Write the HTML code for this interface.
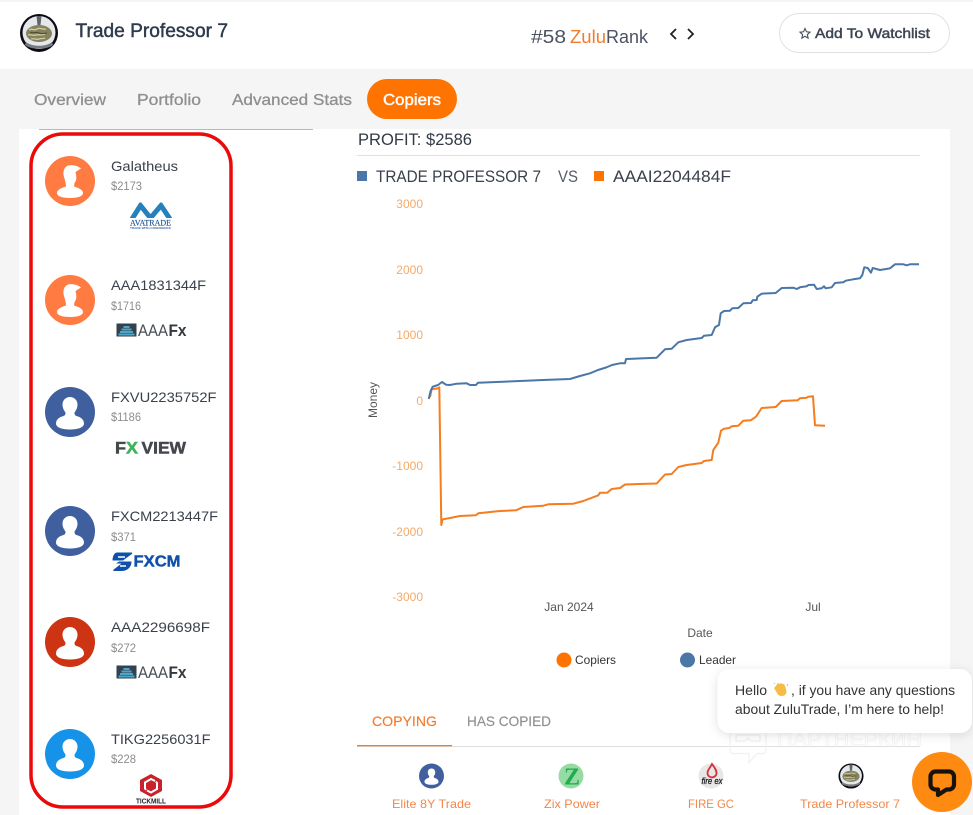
<!DOCTYPE html>
<html lang="en"><head><meta charset="utf-8"><title>Trade Professor 7</title>
<style>
html,body{margin:0;padding:0;background:#f5f5f5;width:973px;height:815px;overflow:hidden}
svg{display:block}
text{font-family:"Liberation Sans",sans-serif}
.m{stroke-width:.45}
</style></head><body>
<svg xmlns="http://www.w3.org/2000/svg" width="973" height="815" viewBox="0 0 973 815">
<defs>
<filter id="sh" x="-10%" y="-20%" width="120%" height="150%"><feDropShadow dx="0" dy="2" stdDeviation="5" flood-color="#000" flood-opacity=".12"/></filter>
<g id="p1"><path d="M-2-15.500C2-16.500 8-15 11-12.500L5.500-9C6.500-5 6.500-2 6-.5L4.500 2L4 5.500C9 7 13 9 13 12C13 15.500 7 17 0 17S-13 15.500-13 12C-13 9-9 7-4 5.500C-4 3-5-1-6-4C-7.500-9-6-14-2-15.500z" fill="#fff"/></g>
<g id="p2"><path d="M0-15c4.500 0 7.500 3.500 7.500 7.500c0 3.500-1.500 6-3 8c0 2 .5 3 2 3.500c4 1 7.500 3.500 7.500 7.500c0 4-6 6-14 6s-14-2-14-6c0-4 3.500-6.500 7.500-7.500c1.500-.5 2-1.500 2-3.500c-1.500-2-3-4.500-3-8c0-4 3-7.500 7.500-7.500z" fill="#fff"/></g>
<g id="tp"><circle r="19" fill="#0c0c10"/><circle cy="-.5" r="16.500" fill="#e4e8ec"/><path d="M-2.500-17h5l-1 9h-3z" fill="#5f646c"/><path d="M-13 9c6 5 20 5 26 0l1 3c-6 5-22 5-28 0z" fill="#777a80"/><ellipse cx="0" cy="0.500" rx="13" ry="8.500" fill="#85825c"/><path d="M-10-3c3-2 5 1 8-1s6 1 9 0M-11 2c3-1 5 1 8 0s6 1 9-1M-8 6c3-1 5 1 8 0s4 0 6-1" stroke="#cfcca6" stroke-width="1.300" fill="none"/><path d="M-9-.5c4 1 6-1 9 .5s5 0 8 0" stroke="#4d4b32" stroke-width="1" fill="none"/></g>
<g id="aaa"><rect x="0" y="0" width="20" height="13" fill="#33424e"/><path d="M7 2.500h6v2H7zM5 5h10v2H5zM3.500 7.500h13v2h-13zM2 10h16v2H2z" fill="#4fa5c6"/><text x="21.500" y="12.500" font-size="16.500" fill="#4a4f55" textLength="30" lengthAdjust="spacingAndGlyphs">AAA</text><text x="52" y="12.500" font-size="16.500" font-weight="700" fill="#33383d" textLength="18" lengthAdjust="spacingAndGlyphs">Fx</text></g>
<clipPath id="av"><rect x="128" y="202.500" width="45" height="15.500"/></clipPath>
</defs>

<rect width="973" height="815" fill="#f5f5f5"/>
<rect y="2" width="973" height="67" fill="#fff"/>
<rect x="19" y="129" width="931" height="686" fill="#fff"/>
<rect x="39" y="129" width="274" height="1" fill="#f5a860"/>

<!-- header -->
<use href="#tp" x="39" y="33"/>
<text x="75.500" y="37" font-size="19" fill="#2e3a4d" stroke="#2e3a4d" class="m" textLength="152.500" lengthAdjust="spacingAndGlyphs">Trade Professor 7</text>
<text x="531" y="43" font-size="18" fill="#4b5260" textLength="35" lengthAdjust="spacingAndGlyphs">#58</text>
<text x="570" y="43" font-size="18" fill="#f47b2a" textLength="36" lengthAdjust="spacingAndGlyphs">Zulu</text>
<text x="606" y="43" font-size="18" fill="#4b5260" textLength="42" lengthAdjust="spacingAndGlyphs">Rank</text>
<path d="M676 29l-5 5l5 5M688 29l5 5l-5 5" fill="none" stroke="#222" stroke-width="1.800"/>
<rect x="779.500" y="13.500" width="170" height="39" rx="19.500" fill="#fff" stroke="#dfe1e5"/>
<path d="M805 28.500l1.500 3.300l3.500.4l-2.600 2.400l.7 3.500l-3.100-1.800l-3.100 1.800l.7-3.500l-2.600-2.400l3.500-.4z" fill="none" stroke="#4a4f5c" stroke-width="1.100"/>
<text x="815" y="38" font-size="14" fill="#3d4452" stroke="#3d4452" class="m" textLength="115" lengthAdjust="spacingAndGlyphs">Add To Watchlist</text>

<!-- tabs -->
<g font-size="16" fill="#8f8f8f" stroke="#8f8f8f" stroke-width=".3">
<text x="34" y="105" textLength="72" lengthAdjust="spacingAndGlyphs">Overview</text>
<text x="137" y="105" textLength="64" lengthAdjust="spacingAndGlyphs">Portfolio</text>
<text x="232" y="105" textLength="120" lengthAdjust="spacingAndGlyphs">Advanced Stats</text>
</g>
<rect x="367" y="79" width="90" height="40" rx="20" fill="#ff7300"/>
<text x="383" y="105" font-size="16" fill="#fff" stroke="#fff" class="m" textLength="58" lengthAdjust="spacingAndGlyphs">Copiers</text>

<!-- red box -->
<rect x="31" y="134" width="200" height="673" rx="32" fill="none" stroke="#ea0a0a" stroke-width="3.500"/>

<!-- list -->
<circle cx="70" cy="181" r="25" fill="#ff7b42"/><use href="#p1" x="70" y="181"/>
<circle cx="70" cy="300" r="25" fill="#ff7b42"/><use href="#p1" x="70" y="300"/>
<circle cx="70" cy="412" r="25" fill="#3f5f9f"/><use href="#p2" x="70" y="412"/>
<circle cx="70" cy="531" r="25" fill="#3f5f9f"/><use href="#p2" x="70" y="531"/>
<circle cx="70" cy="642" r="25" fill="#cc3414"/><use href="#p2" x="70" y="642"/>
<circle cx="70" cy="754" r="25" fill="#1692e8"/><use href="#p2" x="70" y="754"/>
<g font-size="14" fill="#3a404c">
<text x="111" y="171" textLength="67" lengthAdjust="spacingAndGlyphs">Galatheus</text>
<text x="111" y="290" textLength="95" lengthAdjust="spacingAndGlyphs">AAA1831344F</text>
<text x="111" y="402" textLength="105.500" lengthAdjust="spacingAndGlyphs">FXVU2235752F</text>
<text x="111" y="521" textLength="107" lengthAdjust="spacingAndGlyphs">FXCM2213447F</text>
<text x="111" y="632" textLength="99" lengthAdjust="spacingAndGlyphs">AAA2296698F</text>
<text x="111" y="744" textLength="99.500" lengthAdjust="spacingAndGlyphs">TIKG2256031F</text>
</g>
<g font-size="11.500" fill="#8c8c8c">
<text x="111" y="190" textLength="31" lengthAdjust="spacingAndGlyphs">$2173</text>
<text x="111" y="310" textLength="30" lengthAdjust="spacingAndGlyphs">$1716</text>
<text x="111" y="421" textLength="30" lengthAdjust="spacingAndGlyphs">$1186</text>
<text x="111" y="541" textLength="25" lengthAdjust="spacingAndGlyphs">$371</text>
<text x="111" y="652" textLength="25" lengthAdjust="spacingAndGlyphs">$272</text>
<text x="111" y="763" textLength="25" lengthAdjust="spacingAndGlyphs">$228</text>
</g>

<!-- AvaTrade -->
<path clip-path="url(#av)" d="M132 219L140.500 205.500L150.500 218L161 205.500L170 219" fill="none" stroke="#2481bd" stroke-width="5"/>
<text x="130" y="225.500" font-size="8.500" fill="#20518f" stroke="#20518f" stroke-width=".15" style="font-family:'Liberation Serif',serif" textLength="41" lengthAdjust="spacingAndGlyphs">AVATRADE</text>
<text x="130" y="229" font-size="2.800" font-weight="700" fill="#3a6ea8" textLength="41" lengthAdjust="spacingAndGlyphs">TRADE WITH CONFIDENCE</text>

<!-- AAAFx -->
<use href="#aaa" x="116.500" y="323.500"/>
<use href="#aaa" x="116.500" y="665.500"/>

<!-- FXVIEW -->
<text x="115" y="453.500" font-size="17" font-weight="700" fill="#44474b" stroke="#44474b" stroke-width=".5" textLength="11" lengthAdjust="spacingAndGlyphs">F</text>
<text x="126" y="453.500" font-size="17" font-weight="700" fill="#3cb35c" stroke="#3cb35c" stroke-width=".5" textLength="12" lengthAdjust="spacingAndGlyphs">X</text>
<text x="141.500" y="453.500" font-size="17" font-weight="700" fill="#44474b" stroke="#44474b" stroke-width=".5" textLength="44.500" lengthAdjust="spacingAndGlyphs">VIEW</text>

<!-- FXCM -->
<path d="M117 552.500h14.500c.8 0 1 .8.3 1.500l-8.800 6.500h-10.500c0-3.500 1.500-8 4.500-8z" fill="#0e50ab"/>
<path d="M131.500 561.500c0 5.500-4 9.500-10 9.500h-7.500c-.8 0-1-.8-.3-1.500l7.800-6h-5.500l3-2z" fill="#0e50ab"/>
<path d="M118 557h7M120 566h6" stroke="#fff" stroke-width="1.500"/>
<text x="133.500" y="566.500" font-size="15.500" font-weight="700" fill="#0e50ab" stroke="#0e50ab" stroke-width=".4" textLength="47" lengthAdjust="spacingAndGlyphs">FXCM</text>

<!-- Tickmill -->
<path d="M151 774l11 6v11l-11 6l-11-6v-11z" fill="#c8232c"/>
<path d="M146 790l-1-1.500v-6l6-3.500l4 2M156 781.500l1 1.500v6l-6 3.500l-4-2" fill="none" stroke="#fff" stroke-width="2"/>
<text x="136" y="803.500" font-size="7" font-weight="700" fill="#222" textLength="30" lengthAdjust="spacingAndGlyphs">TICKMILL</text>

<!-- profit -->
<text x="358" y="145" font-size="17" fill="#333a45" textLength="114" lengthAdjust="spacingAndGlyphs">PROFIT: $2586</text>
<rect x="357" y="155" width="563" height="1" fill="#e0e0e0"/>
<rect x="357" y="171" width="10" height="10" fill="#4a76a8"/>
<text x="376" y="182" font-size="17" fill="#3a404c" textLength="165" lengthAdjust="spacingAndGlyphs">TRADE PROFESSOR 7</text>
<text x="558" y="182" font-size="17" fill="#555b66" textLength="20" lengthAdjust="spacingAndGlyphs">VS</text>
<rect x="594" y="171" width="10" height="10" fill="#ff7300"/>
<text x="613" y="182" font-size="17" fill="#3a404c" textLength="118" lengthAdjust="spacingAndGlyphs">AAAI2204484F</text>

<!-- axis -->
<g font-size="12" fill="#f5a968" text-anchor="end">
<text x="423" y="208">3000</text><text x="423" y="274">2000</text><text x="423" y="339">1000</text><text x="423" y="405">0</text><text x="423" y="470">-1000</text><text x="423" y="536">-2000</text><text x="423" y="601">-3000</text>
</g>
<text transform="translate(377,400) rotate(-90)" font-size="12" fill="#555" text-anchor="middle">Money</text>
<g font-size="12" fill="#555" text-anchor="middle">
<text x="569" y="611">Jan 2024</text><text x="813" y="611">Jul</text><text x="700" y="637">Date</text>
</g>

<!-- chart -->
<path fill="none" stroke="#f57c1f" stroke-width="2" stroke-linejoin="round" d="M430 397L431.700 389.300L438.300 388.300L439.300 387.300L441.300 525L442.700 519.300L450 518L460 516L476 515.300L478.300 513.300L500 511L516 510.300L523.300 507L543.300 505.700L548.300 504.300L573.300 503.700L583.300 501L598.300 495.300L600 492.700L607.300 492.700L611.700 489L620 488L625 484.500L656.700 483.500L665 474.500L671.700 474L678.300 467L686.700 465L701.700 463L704 461L711.700 460L713.300 450L718.300 442.700L721 430.700L724 428.700L729.300 428L731.700 426.300L738.300 425.700L743.300 420.700L750.700 420.300L756 416.700L761.700 408L775.700 407L781.700 401L797.700 400.300L800 398.300L806.700 397.700L808.300 396.700L813 396.300L815 425.300L825 425.700"/>
<path fill="none" stroke="#4a76a8" stroke-width="2" stroke-linejoin="round" d="M428.700 399L430.700 390.700L432.700 386.700L438 385L442 382L446 384.700L450 385L456.700 383.700L466.700 383.300L470 385L476 385L478 382.700L520 381L543 380L570 379L580 376L590 373.300L598 370L606 367.500L612 365L620 363.300L625 363.300L626 359L656.700 357.700L665 349.300L671.700 348.700L678.300 342.300L686.700 340L701.700 338L704 335.700L711.700 335L715 327.300L719 325L720.700 313.300L724 311L730 310.700L732.300 308.300L738.300 308L743.300 303.300L751 303L752.700 300.300L756.700 300L757.300 296.700L761.700 293.700L775.700 293L781.700 288L793.300 287.700L796.700 289L800 287.300L806.700 286.300L808.300 285L814 284.700L816.700 289L821.700 288.300L824 286.300L825.700 288.300L831.700 287.300L835 283L843.300 282.300L845.700 280.700L853.300 279.300L860 278.300L862.300 275L864.300 267.300L867.700 268L871 272.700L872.700 268L880 270L890 268.300L895 264.300L903.300 264.300L906.700 265.300L910 264.300L919 264.300"/>

<!-- chart legend -->
<circle cx="564" cy="660" r="7.500" fill="#ff7300"/>
<text x="575" y="664" font-size="12" fill="#333" textLength="41" lengthAdjust="spacingAndGlyphs">Copiers</text>
<circle cx="687.500" cy="660" r="7.500" fill="#4a76a8"/>
<text x="699" y="664" font-size="12" fill="#333" textLength="37" lengthAdjust="spacingAndGlyphs">Leader</text>

<!-- bottom tabs -->
<text x="372" y="726" font-size="14" fill="#f47b2a" stroke="#f47b2a" stroke-width=".15" textLength="65" lengthAdjust="spacingAndGlyphs">COPYING</text>
<text x="467" y="726" font-size="14" fill="#8f8f8f" stroke="#8f8f8f" stroke-width=".15" textLength="84" lengthAdjust="spacingAndGlyphs">HAS COPIED</text>
<rect x="357" y="746" width="563" height="1" fill="#dedede"/>
<rect x="357" y="745" width="95" height="1.300" fill="#f47b2a"/>

<!-- watermark -->
<path d="M733 723.500h30a3 3 0 0 1 3 3v24a3 3 0 0 1-3 3h-6l-8 9v-9h-16a3 3 0 0 1-3-3v-24a3 3 0 0 1 3-3z" fill="none" stroke="#f0f0f0" stroke-width="1.200"/>
<path d="M736 735h24v6h-9l-3-3l-3 3h-9z" fill="none" stroke="#f0f0f0" stroke-width="1.200"/>
<text x="777" y="746" font-size="19" fill="none" stroke="#f1f1f1" stroke-width=".6" textLength="145" lengthAdjust="spacingAndGlyphs" style='font-family:"Liberation Sans","DejaVu Sans",sans-serif'>ПАРТНЕРКИН</text>

<!-- bottom avatars -->
<circle cx="431.500" cy="776" r="12.500" fill="#3f5f9f"/><use href="#p2" transform="translate(431.500 776) scale(.5)"/>
<circle cx="571" cy="776" r="12.500" fill="#97dba4"/>
<text x="572" y="784.500" font-size="24" font-weight="700" fill="#1fae4e" text-anchor="middle" style='font-family:"Liberation Serif",serif'>Z</text>
<circle cx="711" cy="776" r="12.500" fill="#e9e6e6"/>
<path d="M712 764c3 4 5 7 4.500 10c-.5 2-2 3-4.500 3.500c-3-.5-4.500-2-4.500-4.500c0-3 2.500-5 4.500-9z" fill="none" stroke="#d0343a" stroke-width="1.800"/>
<text x="712" y="784" font-size="9" font-style="italic" fill="#222" stroke="#222" stroke-width=".3" text-anchor="middle" textLength="21" lengthAdjust="spacingAndGlyphs">fire ex</text>
<use href="#tp" transform="translate(851 776) scale(.66)"/>
<g font-size="12" fill="#f4874a">
<text x="392" y="808" textLength="79" lengthAdjust="spacingAndGlyphs">Elite 8Y Trade</text>
<text x="544" y="808" textLength="56" lengthAdjust="spacingAndGlyphs">Zix Power</text>
<text x="688" y="808" textLength="46" lengthAdjust="spacingAndGlyphs">FIRE GC</text>
<text x="800" y="808" textLength="100" lengthAdjust="spacingAndGlyphs">Trade Professor 7</text>
</g>

<!-- chat -->
<rect x="717.500" y="669" width="254.500" height="64" rx="12" fill="#fff" filter="url(#sh)"/>
<text x="735" y="695" font-size="14" fill="#333" textLength="32" lengthAdjust="spacingAndGlyphs">Hello</text>
<path d="M775 687l3-4l2 1l1-1l1.500 1l1.500 0l1.500 3l1 5c0 2-2 4-4.500 4c-2.500 0-4-1-5-3l-3-5l1-1z" fill="#f6bc45"/>
<path d="M774 684l1-1M787 684l1 2" stroke="#a9c6e6" stroke-width="1" fill="none"/>
<text x="791" y="695" font-size="14" fill="#333" textLength="164" lengthAdjust="spacingAndGlyphs">, if you have any questions</text>
<text x="735" y="714" font-size="14" fill="#333" textLength="209" lengthAdjust="spacingAndGlyphs">about ZuluTrade, I’m here to help!</text>
<circle cx="942" cy="782" r="30" fill="#ff8a12"/>
<path d="M935.500 771.500h13.500a5 5 0 0 1 5 5v8a5 5 0 0 1-5 5h-2.500l-8.500 5.500v-5.500h-2.500a5 5 0 0 1-5-5v-8a5 5 0 0 1 5-5z" fill="none" stroke="#17120c" stroke-width="4.200" stroke-linejoin="round"/>
</svg>
</body></html>
